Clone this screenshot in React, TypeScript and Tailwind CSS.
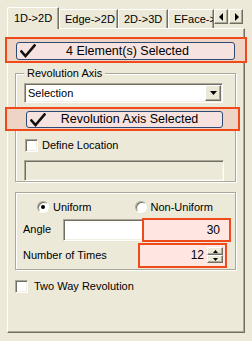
import React from "react";

const F = { fontFamily: '"Liberation Sans", Arial, sans-serif' };

function Tab({ label, active, w }: { label: string; active?: boolean; w: string }) {
  if (active) {
    return (
      <div className={`${w} h-[22px] border border-b-0 border-l-white border-t-white border-r-[#716F64] bg-[#ECE9D8] rounded-tl-[2px] flex items-center justify-center text-[11px] text-black relative z-10 -mb-px shadow-[inset_-1px_0_0_#ACA899]`}>
        {label}
      </div>
    );
  }
  return (
    <div className={`${w} h-[19px] border border-b-0 border-l-white border-t-white border-r-[#716F64] bg-[#ECE9D8] rounded-tl-[2px] flex items-center pl-[5px] text-[11px] text-black overflow-hidden whitespace-nowrap shadow-[inset_-1px_0_0_#ACA899]`}>
      {label}
    </div>
  );
}

function Check() {
  return (
    <svg width="16" height="14" viewBox="0 0 16 14">
      <path d="M1.5 7.5 L5.5 12 L14.5 1.5" fill="none" stroke="#111" strokeWidth="2.6" strokeLinecap="square" />
    </svg>
  );
}

function Checkbox() {
  return (
    <div className="w-[13px] h-[13px] border border-t-[#ACA899] border-l-[#ACA899] border-r-white border-b-white bg-white shrink-0 shadow-[inset_1px_1px_0_#716F64,inset_-1px_-1px_0_#F1EFE2]" />
  );
}

function Radio({ on }: { on?: boolean }) {
  return (
    <div className="w-[12px] h-[12px] rounded-full border border-t-[#ACA899] border-l-[#ACA899] border-r-white border-b-white bg-white flex items-center justify-center shrink-0 shadow-[inset_1px_1px_0_#716F64]">
      {on && <div className="w-[4px] h-[4px] rounded-full bg-black" />}
    </div>
  );
}

const raised =
  "bg-[#ECE9D8] border border-t-white border-l-white border-r-[#716F64] border-b-[#716F64] shadow-[inset_-1px_-1px_0_#ACA899]";

export default function App() {
  return (
    <div style={F} className="w-[252px] h-[341px] bg-[#ECE9D8] text-[11px] text-black flex flex-col overflow-hidden">
      {/* tab strip */}
      <div className="h-[28px] pl-[7px] flex items-end relative">
        <Tab label="1D->2D" active w="w-[52px]" />
        <Tab label="Edge->2D" w="w-[59px]" />
        <Tab label="2D->3D" w="w-[50px]" />
        <Tab label="EFace->" w="w-[46px]" />
        <div className="absolute left-[214px] top-[9px] flex gap-[1px]">
          <div className={`w-[14px] h-[15px] ${raised} flex items-center justify-center`}>
            <svg width="5" height="8" viewBox="0 0 5 8"><path d="M4 0 L0 4 L4 8 Z" fill="#000" /></svg>
          </div>
          <div className={`w-[14px] h-[15px] ${raised} flex items-center justify-center`}>
            <svg width="5" height="8" viewBox="0 0 5 8"><path d="M1 0 L5 4 L1 8 Z" fill="#000" /></svg>
          </div>
        </div>
      </div>

      {/* panel */}
      <div className="ml-[7px] w-[238px] h-[305px] border border-t-white border-l-white border-r-[#716F64] border-b-[#716F64] shadow-[inset_-1px_-1px_0_#ACA899] bg-[#ECE9D8] flex flex-col">
        {/* highlight 1 */}
        <div className="mt-[8px] -ml-[3px] w-[242px] h-[26px] border-2 border-[#F04A1C] bg-[#EDD4C4] pl-[9px] pt-[3px] relative z-10">
          <div className="w-[219px] h-[18px] rounded-[3px] border border-[#2C4A74] bg-[#F6E2DE] flex items-center relative">
            <div className="absolute left-[3px] top-[1px]"><Check /></div>
            <div className="w-full text-center text-[12.5px] pl-[4px]">4 Element(s) Selected</div>
          </div>
        </div>

        {/* group 1 */}
        <div className="mt-[10px] ml-[7px] w-[221px] h-[109px] border border-[#ACA899] shadow-[1px_1px_0_#fff,inset_1px_1px_0_#fff] relative">
          <div className="absolute left-[8px] -top-[8px] px-[3px] bg-[#ECE9D8] leading-[14px]">Revolution Axis</div>
          <div className="mt-[9px] ml-[8px] w-[199px] h-[20px] bg-white border border-t-[#ACA899] border-l-[#ACA899] border-r-white border-b-white shadow-[inset_1px_1px_0_#716F64,inset_-1px_-1px_0_#F1EFE2] flex items-center justify-between">
            <span className="pl-[3px]">Selection</span>
            <div className={`w-[16px] h-[16px] mr-[1px] ${raised} flex items-center justify-center`}>
              <svg width="7" height="4" viewBox="0 0 7 4"><path d="M0 0 H7 L3.5 4 Z" fill="#000" /></svg>
            </div>
          </div>
          {/* highlight 2 */}
          <div className="mt-[4px] -ml-[11px] w-[235px] h-[24px] border-2 border-[#F04A1C] bg-[#EDD4C4] pl-[19px] pt-[2px]">
            <div className="w-[197px] h-[17px] rounded-[3px] border border-[#2C4A74] bg-[#F6E2DE] flex items-center relative">
              <div className="absolute left-[3px] top-[1px]"><Check /></div>
              <div className="w-full text-center text-[12.5px] pl-[10px]">Revolution Axis Selected</div>
            </div>
          </div>
          <div className="mt-[6px] ml-[9px] flex items-center gap-[4px]">
            <Checkbox />
            <span>Define Location</span>
          </div>
          <div className="mt-[6px] ml-[8px] w-[200px] h-[21px] bg-[#ECE9D8] border border-t-[#ACA899] border-l-[#ACA899] border-r-white border-b-white shadow-[inset_1px_1px_0_#716F64,inset_-1px_-1px_0_#F1EFE2]" />
        </div>

        {/* group 2 */}
        <div className="mt-[10px] ml-[7px] w-[221px] h-[78px] border border-[#ACA899] shadow-[1px_1px_0_#fff,inset_1px_1px_0_#fff] flex flex-col">
          <div className="mt-[6px] flex items-center">
            <div className="ml-[21px] flex items-center gap-[4px]">
              <Radio on />
              <span>Uniform</span>
            </div>
            <div className="ml-[43px] flex items-center gap-[4px]">
              <Radio />
              <span>Non-Uniform</span>
            </div>
          </div>
          <div className="mt-[2px] h-[24px] flex items-center relative">
            <span className="ml-[7px] w-[40px]">Angle</span>
            <div className="w-[166px] h-[22px] bg-white border border-t-[#ACA899] border-l-[#ACA899] border-r-white border-b-white shadow-[inset_1px_1px_0_#716F64,inset_-1px_-1px_0_#F1EFE2]" />
            <div className="absolute left-[126px] top-0 w-[89px] h-[24px] border-2 border-[#F04A1C] bg-[#FFE6E0] flex items-center justify-end pr-[9px] text-[12px]">30</div>
          </div>
          <div className="mt-px h-[25px] flex items-center relative">
            <span className="ml-[7px]">Number of Times</span>
            <div className="absolute left-[122px] top-0 w-[89px] h-[25px] border-2 border-[#F04A1C] bg-[#FFE6E0] flex items-center justify-end pr-[2px]">
              <span className="text-[12px] mr-[3px]">12</span>
              <div className="flex flex-col">
                <div className={`w-[16px] h-[8px] ${raised} flex items-center justify-center`}>
                  <svg width="5" height="3" viewBox="0 0 5 3"><path d="M0 3 H5 L2.5 0 Z" fill="#000" /></svg>
                </div>
                <div className={`w-[16px] h-[8px] ${raised} flex items-center justify-center`}>
                  <svg width="5" height="3" viewBox="0 0 5 3"><path d="M0 0 H5 L2.5 3 Z" fill="#000" /></svg>
                </div>
              </div>
            </div>
          </div>
        </div>

        <div className="mt-[8px] ml-[7px] flex items-center gap-[6px]">
          <Checkbox />
          <span>Two Way Revolution</span>
        </div>
      </div>
    </div>
  );
}
